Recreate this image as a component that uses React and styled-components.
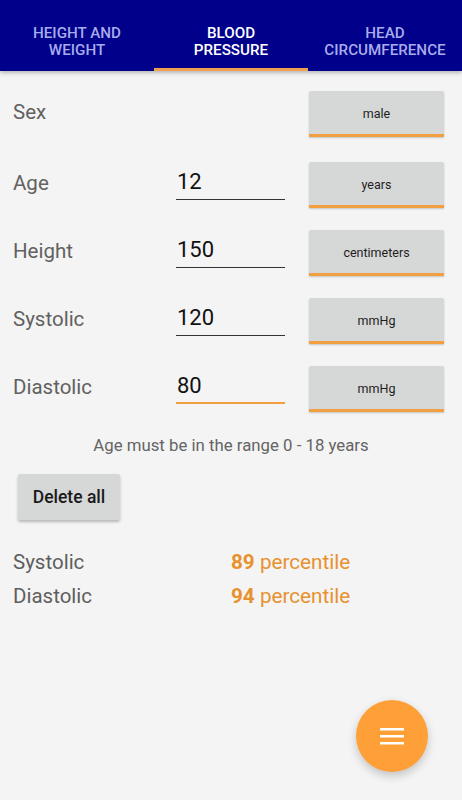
import React from "react";
import styled, { createGlobalStyle } from "styled-components";

const Global = createGlobalStyle`
  html, body { margin: 0; padding: 0; background: #f4f4f4; }
  body { font-family: Roboto, "Noto Sans", sans-serif; }
  * { box-sizing: border-box; }
`;

const Page = styled.div`
  width: 462px;
  min-height: 800px;
  background: #f4f4f4;
  position: relative;
`;

const TabBar = styled.div`
  display: grid;
  grid-template-columns: repeat(3, 1fr);
  height: 71px;
  background: #00008a;
  box-shadow: 0 2px 4px rgba(0,0,0,0.25);
`;

const Tab = styled.div`
  display: flex;
  align-items: center;
  justify-content: center;
  text-align: center;
  font-size: 15.2px;
  font-weight: 500;
  line-height: 17px;
  text-transform: uppercase;
  color: ${p => (p.$active ? "#ffffff" : "rgba(200,205,255,0.85)")};
  border-bottom: 3px solid ${p => (p.$active ? "#f0a050" : "transparent")};
  padding-top: 15px;
`;

const Form = styled.div`
  padding: 20px 18px 0 13px;
  display: flex;
  flex-direction: column;
  gap: 22px;
`;

const Row = styled.div`
  display: grid;
  grid-template-columns: 163px 109px 1fr;
  align-items: start;
  height: 46px;
  margin-bottom: ${p => p.$extra || 0}px;
`;

const Label = styled.div`
  font-size: 20.5px;
  color: #616161;
  line-height: 42px;
`;

const Input = styled.div`
  margin-top: 3px;
  height: 35px;
  font-size: 22px;
  color: #111;
  line-height: 34px;
  border-bottom: ${p => (p.$focused ? "2px solid #f0a040" : "1px solid #333")};
  padding-left: 1px;
`;

const UnitButton = styled.div`
  margin-left: 24px;
  height: 46px;
  background: #d6d7d7;
  border-bottom: 3px solid #f0a040;
  border-radius: 2px 2px 0 0;
  box-shadow: 0 1px 2px rgba(0,0,0,0.2);
  display: flex;
  align-items: center;
  justify-content: center;
  font-size: 12.5px;
  color: #1e1e1e;
  padding-top: 2px;
`;

const Hint = styled.div`
  margin-top: 23px;
  text-align: center;
  font-size: 16.8px;
  color: #646464;
  line-height: 20px;
`;

const DeleteButton = styled.button`
  margin: 19px 0 0 18px;
  width: 102px;
  height: 46px;
  border: none;
  border-radius: 2px;
  background: #d6d7d7;
  box-shadow: 0 2px 3px rgba(0,0,0,0.25);
  font-family: Roboto, sans-serif;
  font-size: 17.5px;
  font-weight: 500;
  color: #1a1a1a;
  padding: 0;
`;

const Results = styled.div`
  margin-top: 30px;
  padding-left: 13px;
  display: grid;
  grid-template-columns: 218px 1fr;
  row-gap: 10px;
`;

const ResultLabel = styled.div`
  font-size: 20.5px;
  color: #5e5e5e;
  line-height: 24px;
`;

const ResultValue = styled.div`
  font-size: 20.7px;
  color: #e8912f;
  line-height: 24px;
  b { font-weight: 700; }
`;

const Fab = styled.div`
  position: absolute;
  right: 34px;
  bottom: 28px;
  width: 72px;
  height: 72px;
  border-radius: 50%;
  background: #ff9f38;
  box-shadow: 0 4px 10px rgba(0,0,0,0.2);
  display: flex;
  align-items: center;
  justify-content: center;
`;

const rows = [
  { label: "Sex", value: null, unit: "male", extra: 3 },
  { label: "Age", value: "12", unit: "years" },
  { label: "Height", value: "150", unit: "centimeters" },
  { label: "Systolic", value: "120", unit: "mmHg" },
  { label: "Diastolic", value: "80", unit: "mmHg", focused: true },
];

export default function App() {
  return (
    <Page>
      <Global />
      <TabBar>
        <Tab>Height and<br />weight</Tab>
        <Tab $active>Blood<br />pressure</Tab>
        <Tab>Head<br />circumference</Tab>
      </TabBar>
      <Form>
        {rows.map(r => (
          <Row key={r.label} $extra={r.extra}>
            <Label>{r.label}</Label>
            {r.value !== null ? <Input $focused={r.focused}>{r.value}</Input> : <div />}
            <UnitButton>{r.unit}</UnitButton>
          </Row>
        ))}
      </Form>
      <Hint>Age must be in the range 0 - 18 years</Hint>
      <DeleteButton>Delete all</DeleteButton>
      <Results>
        <ResultLabel>Systolic</ResultLabel>
        <ResultValue><b>89</b> percentile</ResultValue>
        <ResultLabel>Diastolic</ResultLabel>
        <ResultValue><b>94</b> percentile</ResultValue>
      </Results>
      <Fab>
        <svg width="24" height="20" viewBox="0 0 24 20">
          <rect x="0" y="2" width="24" height="2.5" fill="#fff" />
          <rect x="0" y="9" width="24" height="2.5" fill="#fff" />
          <rect x="0" y="16" width="24" height="2.5" fill="#fff" />
        </svg>
      </Fab>
    </Page>
  );
}
